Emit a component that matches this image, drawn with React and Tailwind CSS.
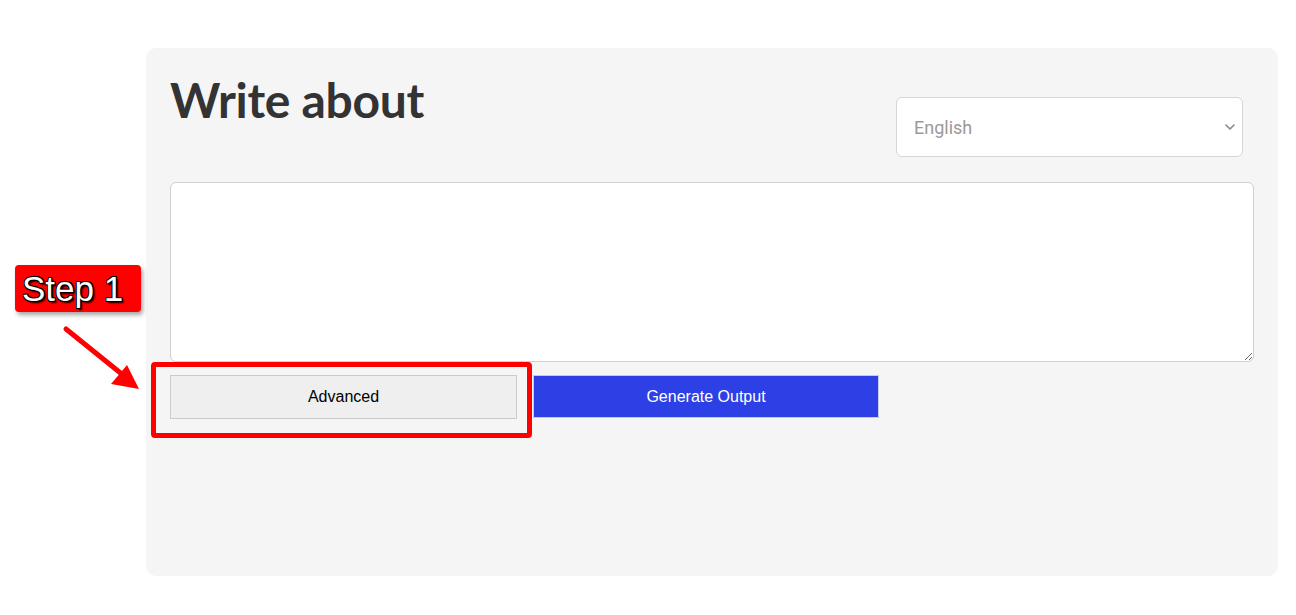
import React from 'react';

const Chevron = () => (
  <svg width="12" height="8" viewBox="0 0 12 8" className="text-[#888]">
    <path d="M2 2l4 4 4-4" fill="none" stroke="currentColor" strokeWidth="1.6" strokeLinecap="round" strokeLinejoin="round" />
  </svg>
);

const App = () => {
  return (
    <div className="relative w-[1296px] h-[615px] bg-white overflow-hidden" style={{ fontFamily: '"Liberation Sans", Arial, sans-serif' }}>
      <section className="ml-[146px] mt-[48px] w-[1132px] h-[528px] bg-[#f5f5f5] rounded-[10px] px-6 pt-[28px]">
        <div className="flex justify-between items-start">
          <h1 className="text-[48px] leading-none font-bold text-[#333] tracking-[-0.3px]" style={{ fontFamily: 'Lato, sans-serif' }}>
            Write about
          </h1>
          <div className="mt-[21px] mr-[11px] w-[347px] h-[60px] bg-white border border-[#d6d6d6] rounded-[6px] flex items-center justify-between pl-[17px] pr-[6px]">
            <span className="text-[18px] text-[#9a9a9a]" style={{ fontFamily: 'Roboto, sans-serif' }}>English</span>
            <Chevron />
          </div>
        </div>

        <textarea
          className="mt-[25px] block w-full h-[180px] bg-white border border-[#d0d0d0] rounded-[6px] outline-none"
        />

        <div className="flex gap-[16px] mt-[13px]">
          <button className="w-[347px] h-[44px] bg-[#efefef] border border-[#cbcbcb] text-[16px] text-black">
            Advanced
          </button>
          <button className="w-[346px] h-[43px] bg-[#2c40e5] border border-[#c8cbe0] text-[16px] text-white">
            Generate Output
          </button>
        </div>
      </section>

      {/* annotation overlay */}
      <div className="absolute left-[151px] top-[362px] w-[381px] h-[76px] border-[5px] border-[#ff0000] rounded-[4px]" />

      <div className="absolute left-[15px] top-[265px] w-[126px] h-[47px] bg-[#ff0000] rounded-[4px] shadow-[2px_3px_4px_rgba(0,0,0,0.35)] flex items-center pl-[7px]">
        <span
          className="text-[35px] leading-none text-white"
          style={{ textShadow: '-1px -1px 0 #000, 1px -1px 0 #000, -1px 1px 0 #000, 1px 1px 0 #000, 2px 2px 2px #000' }}
        >
          Step 1
        </span>
      </div>

      <svg className="absolute left-[55px] top-[320px]" width="95" height="80" viewBox="0 0 95 80">
        <line x1="11" y1="9" x2="68" y2="55" stroke="#ff0000" strokeWidth="5" strokeLinecap="round" />
        <polygon points="84,69 56,64 72,45" fill="#ff0000" />
      </svg>
    </div>
  );
};

export default App;
